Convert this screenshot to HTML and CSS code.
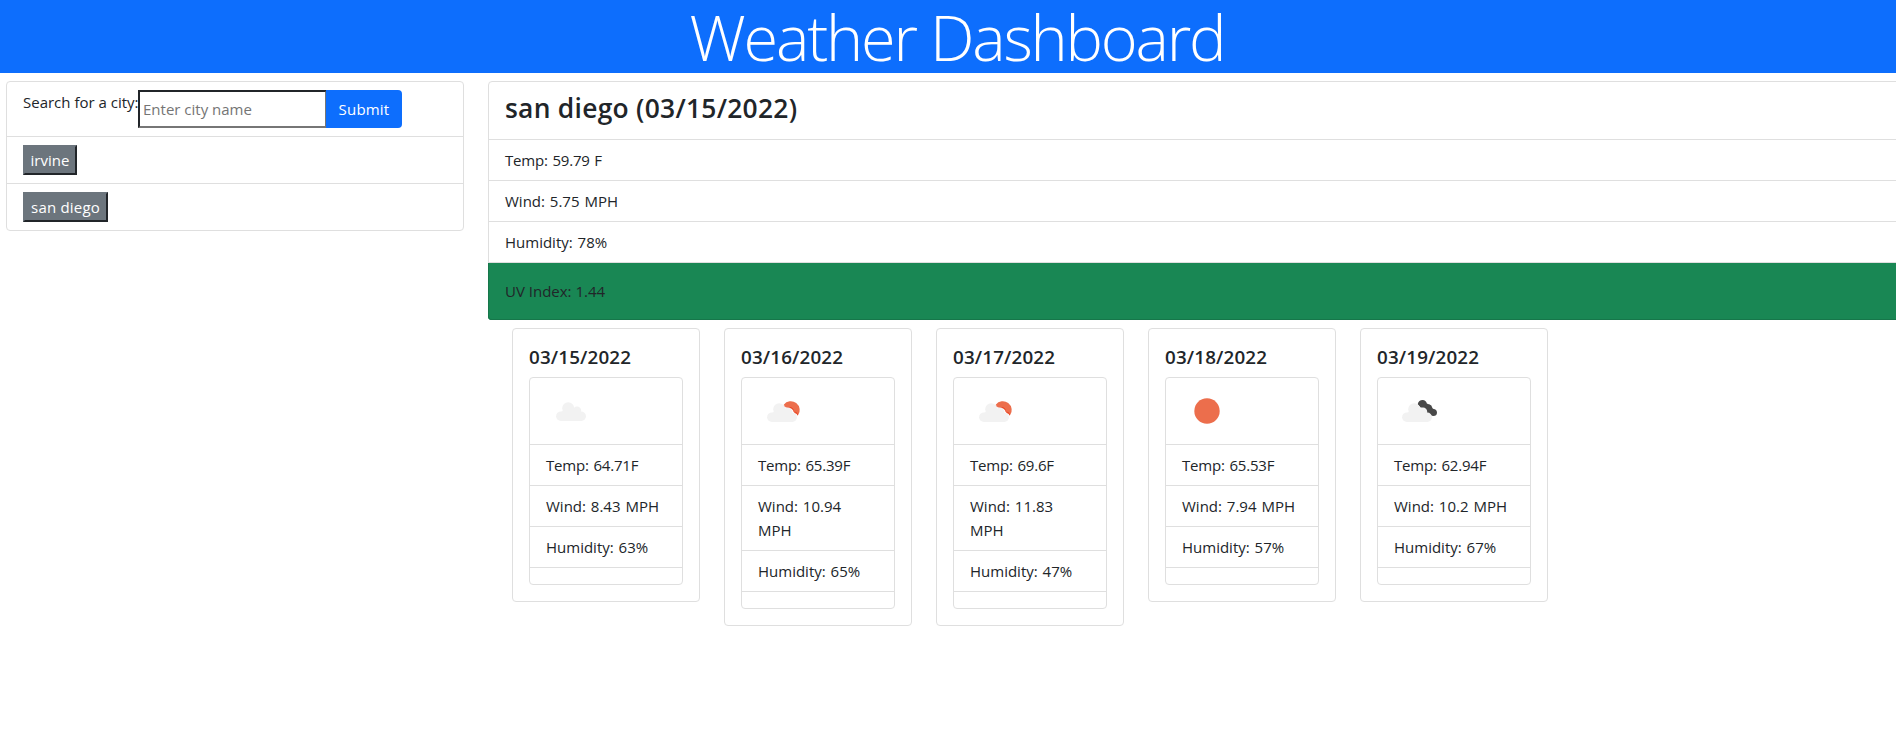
FILE: index.html
```html
<!DOCTYPE html>
<html lang="en">
<head>
<meta charset="utf-8">
<title>Weather Dashboard</title>
<link rel="stylesheet" href="styles.css">
</head>
<body>
<svg width="0" height="0" class="defs" aria-hidden="true">
  <symbol id="cloud" viewBox="0 0 50 50">
    <g fill="#f2f2f2">
      <circle cx="22.200" cy="22.200" r="6"/>
      <circle cx="31" cy="24.800" r="4.200"/>
      <circle cx="14.900" cy="30.200" r="4.800"/>
      <circle cx="35.300" cy="30.300" r="4.700"/>
      <path d="M15 35V26l3-2 12 0 5 4v7z"/>
    </g>
  </symbol>
  <symbol id="few" viewBox="0 0 50 50">
    <path d="M25.700 18.700a8.700 8.700 0 1 1 14.200 10.800l-3-1.500-1.500-4-6-1.500z" fill="#ec6e4c"/>
    <path d="M26 19.500l2.500 2.500 4.500-.5 2 1.500.5 3 3 .5 1.200 2.500" fill="none" stroke="#eb4726" stroke-width="1"/>
    <path d="M26.500 21q3.500.5 4.500 1.500 3-.5 3.800 2 .7 2.500 4.500 4l-6 4-7-4z" fill="#fff"/>
    <use href="#cloud" x="-1" y="1" width="50" height="50"/>
  </symbol>
  <symbol id="sun" viewBox="0 0 50 50"><circle cx="25" cy="25" r="12.700" fill="#ec6e4c"/></symbol>
  <symbol id="broken" viewBox="0 0 50 50">
    <path d="M23.700 18.200q1-4.200 5-4.200 3.200.2 4.200 3.600 1.500.8 2.300.6 2.700.6 3.100 3.600.5 1.200 1.700 1.200 3 .8 3 3.700-.2 3.300-3.600 3.300-3.200 0-4.500-3-3 .5-3.700-2-1.500-3.500-4.500-3.500z" fill="#484848"/>
    <use href="#cloud" x="-2" y="1" width="50" height="50"/>
  </symbol>
</svg>
<header class="header"><h1 class="title">Weather Dashboard</h1></header>
<main class="layout">
  <ul class="list sidebar">
    <li class="item search">
      <label class="label" for="city">Search for a city:</label>
      <input class="input" id="city" placeholder="Enter city name">
      <button class="submit">Submit</button>
    </li>
    <li class="item"><button class="history irvine">irvine</button></li>
    <li class="item"><button class="history diego">san diego</button></li>
  </ul>
  <section class="content">
    <ul class="list current">
      <li class="item heading"><h3 class="city">san diego (03/15/2022)</h3></li>
      <li class="item temp">Temp: 59.79 F</li>
      <li class="item">Wind: 5.75 MPH</li>
      <li class="item">Humidity: 78%</li>
      <li class="item uv">UV Index: 1.44</li>
    </ul>
    <div class="forecast">
      <article class="card">
        <h5 class="date">03/15/2022</h5>
        <ul class="list">
          <li class="item"><svg class="icon"><use href="#cloud"/></svg></li>
          <li class="item temp">Temp: 64.71F</li>
          <li class="item">Wind: 8.43 MPH</li>
          <li class="item">Humidity: 63%</li>
          <li class="item"></li>
        </ul>
      </article>
      <article class="card">
        <h5 class="date">03/16/2022</h5>
        <ul class="list">
          <li class="item"><svg class="icon"><use href="#few"/></svg></li>
          <li class="item temp">Temp: 65.39F</li>
          <li class="item">Wind: 10.94 MPH</li>
          <li class="item">Humidity: 65%</li>
          <li class="item"></li>
        </ul>
      </article>
      <article class="card">
        <h5 class="date">03/17/2022</h5>
        <ul class="list">
          <li class="item"><svg class="icon"><use href="#few"/></svg></li>
          <li class="item temp">Temp: 69.6F</li>
          <li class="item">Wind: 11.83 MPH</li>
          <li class="item">Humidity: 47%</li>
          <li class="item"></li>
        </ul>
      </article>
      <article class="card">
        <h5 class="date">03/18/2022</h5>
        <ul class="list">
          <li class="item"><svg class="icon"><use href="#sun"/></svg></li>
          <li class="item temp">Temp: 65.53F</li>
          <li class="item">Wind: 7.94 MPH</li>
          <li class="item">Humidity: 57%</li>
          <li class="item"></li>
        </ul>
      </article>
      <article class="card">
        <h5 class="date">03/19/2022</h5>
        <ul class="list">
          <li class="item"><svg class="icon"><use href="#broken"/></svg></li>
          <li class="item temp">Temp: 62.94F</li>
          <li class="item">Wind: 10.2 MPH</li>
          <li class="item">Humidity: 67%</li>
          <li class="item"></li>
        </ul>
      </article>
    </div>
  </section>
</main>
</body>
</html>
```
FILE: styles.css
```css
* { box-sizing: border-box; }
body {
  margin: 0;
  background: #fff;
  color: #212529;
  font: 15px/24px "Open Sans", "Noto Sans", sans-serif;
  overflow: hidden;
}
h1, h3, h5, ul { margin: 0; padding: 0; }
.defs { display: block; }
.header { height: 73px; background: #0d6efd; }
.title {
  padding-left: 18px;
  color: #fff;
  font-size: 63px;
  font-weight: 300;
  line-height: 73px;
  letter-spacing: -2.2px;
  text-align: center;
  white-space: nowrap;
}
.layout { display: flex; align-items: flex-start; gap: 24px; padding: 8px 0 0 6px; }
.list { list-style: none; border: 1px solid #dfdfdf; border-radius: 4px; }
.item { padding: 8px 16px; word-spacing: 1px; }
.item + .item { border-top: 1px solid #dfdfdf; }
.temp { letter-spacing: -.2px; }
.sidebar { flex: 0 0 458px; }
.search { display: flex; align-items: flex-start; height: 54px; word-spacing: 0; }
.label { width: 115px; white-space: nowrap; }
.input {
  width: 189px;
  height: 38px;
  margin: 0;
  padding: 1px 3px;
  border: 2px solid;
  border-color: #212529 #767676 #767676 #212529;
  border-radius: 0;
  background: #fff;
  font: 15px "Open Sans", sans-serif;
}
.input::placeholder { color: #757575; }
.submit {
  width: 76px;
  height: 38px;
  margin-left: -1px;
  padding: 0;
  border: 0;
  border-radius: 0 4px 4px 0;
  background: #0d6efd;
  color: #fff;
  font: 15px "Open Sans", sans-serif;
  letter-spacing: .2px;
}
.history {
  display: block;
  height: 30px;
  padding: 0;
  border: 2px solid;
  border-color: #6c757d #212529 #212529 #6c757d;
  background: #6c757d;
  color: #fff;
  font: 15px/24px "Open Sans", sans-serif;
}
.irvine { width: 54px; }
.diego { width: 85px; letter-spacing: .2px; }
.content { flex: 0 0 1440px; }
.heading { height: 57px; word-spacing: 0; }
.city { font-size: 26.4px; font-weight: 600; line-height: 36px; letter-spacing: .27px; white-space: nowrap; }
.current .uv {
  margin: 0 -1px -1px;
  padding: 16px 17px 17px;
  border-radius: 0 0 4px 4px;
  border-top-color: #dfdfdf;
  background: #198754;
  box-shadow: inset 0 -1px #16764a, inset 1px 0 #16764a;
  word-spacing: 0;
}
.forecast { display: flex; align-items: flex-start; gap: 24px; padding: 8px 24px; }
.card { width: 188px; padding: 16px; border: 1px solid #dfdfdf; border-radius: 4px; }
.date { margin-bottom: 8px; font-size: 18.8px; font-weight: 600; line-height: 25px; height: 24px; letter-spacing: .15px; }
.icon { display: block; width: 50px; height: 50px; }
```
